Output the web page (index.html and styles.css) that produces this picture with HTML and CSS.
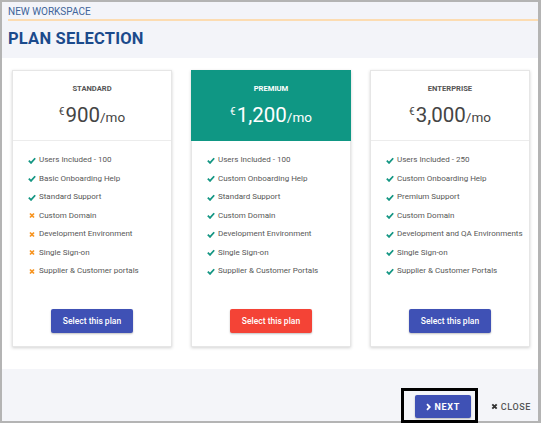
FILE: index.html
```html
<!DOCTYPE html>
<html lang="en">
<head>
<meta charset="utf-8">
<title>Plan Selection</title>
<link rel="stylesheet" href="styles.css">
</head>
<body>
<div class="dialog">
  <header class="head">
    <div class="crumb">NEW WORKSPACE</div>
    <h1 class="title">PLAN SELECTION</h1>
  </header>
  <main class="plans">
    <section class="card">
      <div class="card-head">
        <div class="plan-name">STANDARD</div>
        <div class="price"><span class="cur">€</span><span class="amt">900</span><span class="per">/mo</span></div>
      </div>
      <ul class="features">
        <li><svg class="ico" viewBox="0 0 10 8"><path class="chk" d="M1 4.2 3.8 7 9 1.2"/></svg>Users Included - 100</li>
        <li><svg class="ico" viewBox="0 0 10 8"><path class="chk" d="M1 4.2 3.8 7 9 1.2"/></svg>Basic Onboarding Help</li>
        <li><svg class="ico" viewBox="0 0 10 8"><path class="chk" d="M1 4.2 3.8 7 9 1.2"/></svg>Standard Support</li>
        <li><svg class="ico" viewBox="0 0 10 8"><path class="no" d="M2.5 1.5 7.5 6.5M7.5 1.5 2.5 6.5"/></svg>Custom Domain</li>
        <li><svg class="ico" viewBox="0 0 10 8"><path class="no" d="M2.5 1.5 7.5 6.5M7.5 1.5 2.5 6.5"/></svg>Development Environment</li>
        <li><svg class="ico" viewBox="0 0 10 8"><path class="no" d="M2.5 1.5 7.5 6.5M7.5 1.5 2.5 6.5"/></svg>Single Sign-on</li>
        <li><svg class="ico" viewBox="0 0 10 8"><path class="no" d="M2.5 1.5 7.5 6.5M7.5 1.5 2.5 6.5"/></svg>Supplier &amp; Customer portals</li>
      </ul>
      <button class="select">Select this plan</button>
    </section>
    <section class="card featured">
      <div class="card-head">
        <div class="plan-name">PREMIUM</div>
        <div class="price"><span class="cur">€</span><span class="amt">1,200</span><span class="per">/mo</span></div>
      </div>
      <ul class="features">
        <li><svg class="ico" viewBox="0 0 10 8"><path class="chk" d="M1 4.2 3.8 7 9 1.2"/></svg>Users Included - 100</li>
        <li><svg class="ico" viewBox="0 0 10 8"><path class="chk" d="M1 4.2 3.8 7 9 1.2"/></svg>Custom Onboarding Help</li>
        <li><svg class="ico" viewBox="0 0 10 8"><path class="chk" d="M1 4.2 3.8 7 9 1.2"/></svg>Standard Support</li>
        <li><svg class="ico" viewBox="0 0 10 8"><path class="chk" d="M1 4.2 3.8 7 9 1.2"/></svg>Custom Domain</li>
        <li><svg class="ico" viewBox="0 0 10 8"><path class="chk" d="M1 4.2 3.8 7 9 1.2"/></svg>Development Environment</li>
        <li><svg class="ico" viewBox="0 0 10 8"><path class="chk" d="M1 4.2 3.8 7 9 1.2"/></svg>Single Sign-on</li>
        <li><svg class="ico" viewBox="0 0 10 8"><path class="chk" d="M1 4.2 3.8 7 9 1.2"/></svg>Supplier &amp; Customer Portals</li>
      </ul>
      <button class="select red">Select this plan</button>
    </section>
    <section class="card">
      <div class="card-head">
        <div class="plan-name">ENTERPRISE</div>
        <div class="price"><span class="cur">€</span><span class="amt">3,000</span><span class="per">/mo</span></div>
      </div>
      <ul class="features">
        <li><svg class="ico" viewBox="0 0 10 8"><path class="chk" d="M1 4.2 3.8 7 9 1.2"/></svg>Users Included - 250</li>
        <li><svg class="ico" viewBox="0 0 10 8"><path class="chk" d="M1 4.2 3.8 7 9 1.2"/></svg>Custom Onboarding Help</li>
        <li><svg class="ico" viewBox="0 0 10 8"><path class="chk" d="M1 4.2 3.8 7 9 1.2"/></svg>Premium Support</li>
        <li><svg class="ico" viewBox="0 0 10 8"><path class="chk" d="M1 4.2 3.8 7 9 1.2"/></svg>Custom Domain</li>
        <li><svg class="ico" viewBox="0 0 10 8"><path class="chk" d="M1 4.2 3.8 7 9 1.2"/></svg>Development and QA Environments</li>
        <li><svg class="ico" viewBox="0 0 10 8"><path class="chk" d="M1 4.2 3.8 7 9 1.2"/></svg>Single Sign-on</li>
        <li><svg class="ico" viewBox="0 0 10 8"><path class="chk" d="M1 4.2 3.8 7 9 1.2"/></svg>Supplier &amp; Customer Portals</li>
      </ul>
      <button class="select">Select this plan</button>
    </section>
  </main>
  <footer class="foot">
    <button class="next"><svg class="chev" viewBox="0 0 6 9"><path d="M1.2 1 4.6 4.5 1.2 8"/></svg>NEXT</button>
    <button class="close"><svg class="xic" viewBox="0 0 8 8"><path d="M1.5 1.5 6.5 6.5M6.5 1.5 1.5 6.5"/></svg>CLOSE</button>
    <div class="focus-ring"></div>
  </footer>
</div>
</body>
</html>
```

FILE: styles.css
```css
* { box-sizing: border-box; }
html, body { margin: 0; padding: 0; background: #fff; }
body { font-family: Roboto, "Noto Sans", Arial, sans-serif; }

.dialog {
  width: 541px;
  height: 423px;
  border: 2px solid #b4b4b4;
  border-right-width: 3px;
  display: flex;
  flex-direction: column;
  background: #fff;
}

.head {
  height: 56px;
  background: #f3f4f9;
  padding-top: 3px;
}
.crumb {
  margin-left: 6px;
  font-size: 10px;
  line-height: 14px;
  color: #41649a;
  border-bottom: 2px solid #fcdcb2;
}
.title {
  margin: 8px 0 0 6px;
  font-size: 16.5px;
  line-height: 20px;
  font-weight: 700;
  color: #1b4a8c;
  letter-spacing: 0.2px;
}

.plans {
  height: 311px;
  padding: 12px 8px 0 10px;
  display: grid;
  grid-template-columns: repeat(3, 160px);
  column-gap: 19px;
  align-items: start;
}

.card {
  height: 277px;
  border: 1px solid #e6e6e6;
  background: #fff;
  box-shadow: 0 1px 3px rgba(0,0,0,0.18);
  display: flex;
  flex-direction: column;
  align-items: center;
}
.card-head {
  align-self: stretch;
  height: 70px;
  border-bottom: 1px solid #ececec;
  padding-top: 13px;
  text-align: center;
  color: #444;
}
.featured .card-head {
  background: #0f9784;
  border-bottom-color: #0f9784;
  color: #fff;
  margin: -1px -1px 0;
  height: 71px;
  padding-top: 14px;
}
.plan-name {
  font-size: 7.6px;
  line-height: 10px;
  font-weight: 700;
  color: #555;
}
.featured .plan-name { color: #fff; }
.price {
  margin-top: 5px;
  line-height: 26px;
  white-space: nowrap;
}
.cur {
  font-size: 10px;
  vertical-align: 7px;
  margin-right: 1px;
}
.amt { font-size: 20.5px; }
.per { font-size: 13.5px; }

.features {
  align-self: stretch;
  list-style: none;
  margin: 0;
  padding: 10px 0 0 15px;
  flex: 1;
}
.features li {
  display: flex;
  align-items: center;
  font-size: 8px;
  line-height: 18.5px;
  color: #575757;
  white-space: nowrap;
}
.ico {
  width: 8px;
  height: 7px;
  margin-right: 3px;
  flex: none;
}
.chk { fill: none; stroke: #149683; stroke-width: 2.2; }
.no { fill: none; stroke: #f7931e; stroke-width: 2.2; }

.select {
  width: 82px;
  height: 24px;
  margin-bottom: 13px;
  border: none;
  border-radius: 2px;
  background: #3f51b5;
  color: #fff;
  font-family: Roboto, Arial, sans-serif;
  font-size: 8.5px;
  font-weight: 500;
  box-shadow: 0 1px 2px rgba(0,0,0,0.25);
}
.select.red { background: #f44336; }

.foot {
  position: relative;
  flex: 1;
  background: #f4f5f9;
  display: flex;
  justify-content: flex-end;
  align-items: flex-end;
  padding: 0 5px 3px 0;
}
.next {
  width: 56px;
  height: 23px;
  border: none;
  border-radius: 2px;
  background: #3f51b5;
  color: #fff;
  font-family: Roboto, Arial, sans-serif;
  font-size: 9px;
  font-weight: 700;
  letter-spacing: 0.7px;
  display: flex;
  align-items: center;
  justify-content: center;
  gap: 4px;
  margin-right: 18px;
  box-shadow: 0 1px 2px rgba(0,0,0,0.25);
}
.chev { width: 5px; height: 8px; }
.chev path { fill: none; stroke: #fff; stroke-width: 2.2; }
.close {
  height: 23px;
  border: none;
  background: transparent;
  color: #555;
  font-family: Roboto, Arial, sans-serif;
  font-size: 9px;
  font-weight: 500;
  letter-spacing: 0.6px;
  display: flex;
  align-items: center;
  gap: 3px;
  padding: 0 2px;
}
.xic { width: 7px; height: 7px; }
.xic path { fill: none; stroke: #333; stroke-width: 2.2; }

.focus-ring {
  position: absolute;
  left: 399px;
  top: 19px;
  width: 77px;
  height: 35px;
  border: 3px solid #000;
  pointer-events: none;
}
```
